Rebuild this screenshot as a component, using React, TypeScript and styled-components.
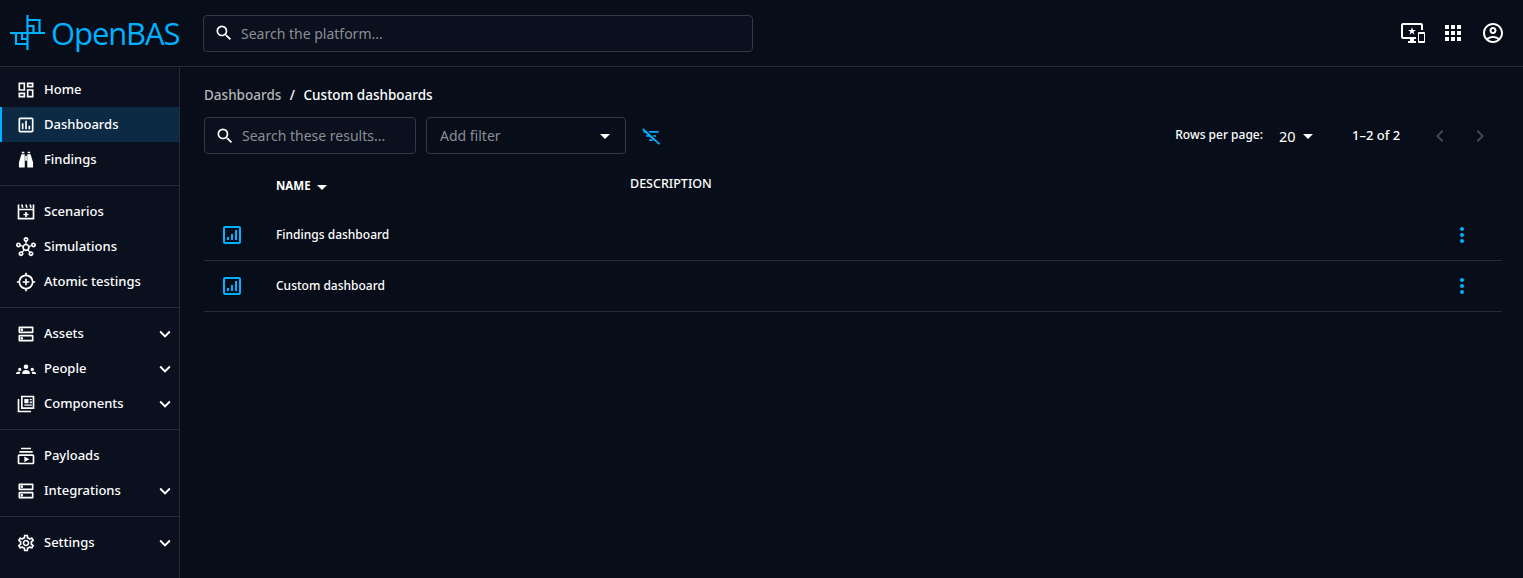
import * as React from "react";
import styled, { createGlobalStyle } from "styled-components";
import {
  MdApps,
  MdArrowDropDown,
  MdChevronLeft,
  MdChevronRight,
  MdExpandMore,
  MdMoreVert,
  MdOutlineAccountCircle,
  MdOutlineDashboard,
  MdOutlineDns,
  MdOutlineHub,
  MdOutlineImportantDevices,
  MdOutlineInsertChart,
  MdOutlineSettings,
  MdOutlineSubscriptions,
  MdSearch,
} from "react-icons/md";

const accent = "#00b1ff";
const line = "#262b37";

const GlobalStyle = createGlobalStyle`
  html, body { margin: 0; height: 100%; background: #070d19; }
  body { font-family: "Noto Sans", Roboto, sans-serif; color: #fff; overflow: hidden; }
  * { box-sizing: border-box; }
`;

const Page = styled.div`
  height: 578px;
  display: flex;
  flex-direction: column;
`;

const TopBar = styled.header`
  height: 67px;
  flex-shrink: 0;
  display: flex;
  align-items: center;
  padding: 0 18px 0 10px;
  border-bottom: 1px solid ${line};
`;

const Logo = styled.div`
  width: 193px;
  display: flex;
  align-items: center;
  gap: 5px;
  color: ${accent};
`;

const LogoText = styled.span`
  font-family: "Open Sans", sans-serif;
  font-weight: 400;
  font-size: 31px;
  letter-spacing: -1.1px;
  line-height: 36px;
`;

const SearchField = styled.div<{ $width: number; $height: number }>`
  width: ${(p) => p.$width}px;
  height: ${(p) => p.$height}px;
  display: flex;
  align-items: center;
  gap: 7px;
  padding: 0 10px;
  background: #0a101e;
  border: 1px solid #333843;
  border-radius: 4px;
  color: #fff;
  font-size: 20px;
`;

const Placeholder = styled.span`
  font-size: 14px;
  color: #8b8e94;
`;

const TopActions = styled.div`
  margin-left: auto;
  display: flex;
  align-items: center;
  gap: 16px;
  font-size: 24px;
`;

const Body = styled.div`
  flex: 1;
  display: flex;
  min-height: 0;
`;

const Sidebar = styled.nav`
  width: 180px;
  flex-shrink: 0;
  padding-top: 5px;
  background: #0a101e;
  border-right: 1px solid ${line};
`;

const NavGroup = styled.div`
  padding: 8px 0;
  border-bottom: 1px solid ${line};
  &:first-child {
    padding-top: 0;
  }
  &:last-child {
    border-bottom: 0;
  }
`;

const NavItem = styled.div<{ $active?: boolean }>`
  height: 35px;
  display: flex;
  align-items: center;
  padding-right: 3px;
  font-size: 13px;
  font-weight: 500;
  background: ${(p) => (p.$active ? "#0c2a43" : "transparent")};
  border-left: ${(p) => (p.$active ? `2px solid ${accent}` : "0")};
  padding-left: ${(p) => (p.$active ? "14px" : "16px")};
`;

const NavIcon = styled.span`
  width: 20px;
  height: 20px;
  margin-right: 8px;
  display: flex;
  font-size: 20px;
`;

const NavLabel = styled.span`
  padding-bottom: 2px;
`;

const NavChevron = styled.span`
  margin-left: auto;
  display: flex;
  font-size: 22px;
`;

const Main = styled.main`
  flex: 1;
  min-width: 0;
  padding: 21px 21px 0 24px;
`;

const Breadcrumb = styled.div`
  display: flex;
  gap: 8.5px;
  height: 14px;
  align-items: center;
  font-size: 13.5px;
  font-weight: 500;
`;

const Crumb = styled.span<{ $muted?: boolean }>`
  color: ${(p) => (p.$muted ? "#b4b6ba" : "#fff")};
`;

const Toolbar = styled.div`
  margin-top: 15px;
  display: flex;
  align-items: center;
`;

const FilterSelect = styled.div`
  width: 200px;
  height: 37px;
  margin-left: 10px;
  display: flex;
  align-items: center;
  justify-content: space-between;
  padding: 0 8px 0 13px;
  border: 1px solid #333843;
  border-radius: 4px;
  font-size: 24px;
`;

const ClearFilter = styled.span`
  margin-left: 15px;
  display: flex;
  color: ${accent};
`;

const Pager = styled.div`
  margin-left: auto;
  margin-right: 2px;
  display: flex;
  align-items: center;
  font-size: 12px;
  font-weight: 500;
`;

const PagerText = styled.span`
  padding-bottom: 2px;
`;

const PerPage = styled.span`
  display: flex;
  align-items: center;
  margin-left: 16px;
  width: 73px;
  font-size: 14.5px;
  font-weight: 400;
`;

const Range = styled.span`
  width: 68px;
  padding-bottom: 2px;
  font-size: 13px;
`;

const PageButton = styled.span`
  width: 40px;
  display: flex;
  justify-content: center;
  font-size: 24px;
  color: #43474f;
`;

const HeaderRow = styled.div`
  margin-top: 20px;
  height: 36px;
  display: flex;
`;

const NameHead = styled.div`
  width: 354px;
  margin-left: 72px;
  display: flex;
  align-items: center;
  height: 25px;
  font-size: 11.5px;
  font-weight: 700;
  svg {
    margin-left: -1px;
  }
`;

const NameText = styled.span`
  padding-bottom: 2px;
`;

const DescriptionHead = styled.div`
  height: 19px;
  line-height: 19px;
  font-size: 12.5px;
  font-weight: 500;
`;

const Row = styled.div`
  height: 51px;
  display: flex;
  align-items: center;
  border-bottom: 1px solid ${line};
  font-size: 12px;
  font-weight: 500;
`;

const RowLabel = styled.span`
  padding-bottom: 2px;
`;

const RowIcon = styled.span`
  width: 72px;
  padding-left: 16px;
  display: flex;
  font-size: 24px;
  color: ${accent};
`;

const RowAction = styled.span`
  margin-left: auto;
  margin-right: 28px;
  display: flex;
  font-size: 24px;
  color: ${accent};
`;

const Svg = ({ children }: { children: React.ReactNode }) => (
  <svg viewBox="0 0 24 24" width="20" height="20" fill="currentColor">
    {children}
  </svg>
);

const LogoMark = () => (
  <svg width="36" height="36" viewBox="0 0 36 36" fill="none" stroke="currentColor" strokeWidth="2.2">
    <path d="M0 18h35M17.5 0v35M17.5 5h12v13M6 18v11h11.5M12 18v6h5.5M17.5 11h6v7" />
  </svg>
);

const Binoculars = () => (
  <Svg>
    <path d="M7 2h3v2H7zM14 2h3v2h-3zM6.500 5h4v15a1 1 0 0 1-1 1h-5a1 1 0 0 1-1-1v-5zM13.500 5h4l3 10v5a1 1 0 0 1-1 1h-5a1 1 0 0 1-1-1zM11 7h2v6h-2z" />
  </Svg>
);

const Clapper = () => (
  <Svg>
    <path
      fillRule="evenodd"
      d="M2 8h20v13H2zM4 10v9h16v-9zM2 3h2v5H2zM6 3h2l1 4H7zM11 3h2l1 4h-2zM16 3h2l1 4h-2zM20 3h2v5h-2zM11 12h2v2h2v2h-2v2h-2v-2H9v-2h2z"
    />
  </Svg>
);

const Target = () => (
  <Svg>
    <path
      fillRule="evenodd"
      d="M11 1h2v2.100a9 9 0 0 1 7.900 7.900H23v2h-2.100a9 9 0 0 1-7.900 7.900V23h-2v-2.100A9 9 0 0 1 3.100 13H1v-2h2.100A9 9 0 0 1 11 3.100zM12 5a7 7 0 1 0 0 14 7 7 0 0 0 0-14zM11 8h2v3h3v2h-3v3h-2v-3H8v-2h3z"
    />
  </Svg>
);

const People = () => (
  <Svg>
    <path d="M12 6.500a2.800 2.800 0 1 1 0 5.600 2.800 2.800 0 0 1 0-5.600zM7.500 18v-1.600c0-1.700 2-3.200 4.500-3.200s4.500 1.500 4.500 3.200V18zM4.500 10.500a2 2 0 1 1 0 4 2 2 0 0 1 0-4zM19.500 10.500a2 2 0 1 1 0 4 2 2 0 0 1 0-4zM0 18v-1c0-1 1.500-1.800 3.500-1.800.7 0 1.300.1 1.800.3-.5.700-.8 1.500-.8 2.500zM24 18v-1c0-1-1.500-1.800-3.500-1.800-.7 0-1.300.1-1.800.3.500.700.800 1.500.800 2.500z" />
  </Svg>
);

const Papers = () => (
  <Svg>
    <path
      fillRule="evenodd"
      d="M6 2h16v16H6zM8 4v12h12V4zM2 6h2v14h14v2H2zM10 6h5v5h-5zM16.500 6H19v1.500h-2.500zM16.500 9H19v2h-2.500zM10 12.500h9V14h-9z"
    />
  </Svg>
);

const FilterOff = () => (
  <svg viewBox="0 0 24 24" width="20" height="20" fill="currentColor">
    <path d="M10.830 8H21V6H8.830zm5 5H18v-2h-4.170zM14 16.830V18h-4v-2h3.170zM2.810 2.810 1.390 4.220 3.170 6H3v2h2.170l3 3H6v2h4.170L21.780 22.610l1.410-1.410z" />
  </svg>
);

const SmallChart = () => (
  <svg viewBox="0 0 24 24" width="24" height="24" fill="currentColor">
    <path
      fillRule="evenodd"
      d="M5 3h14a2 2 0 0 1 2 2v14a2 2 0 0 1-2 2H5a2 2 0 0 1-2-2V5a2 2 0 0 1 2-2zM5 5v14h14V5zM7 14h2v3H7zM11 11h2v6h-2zM15 7h2v10h-2z"
    />
  </svg>
);

type Item = { label: string; icon: React.ReactNode; active?: boolean; more?: boolean };

const groups: Item[][] = [
  [
    { label: "Home", icon: <MdOutlineDashboard /> },
    { label: "Dashboards", icon: <MdOutlineInsertChart />, active: true },
    { label: "Findings", icon: <Binoculars /> },
  ],
  [
    { label: "Scenarios", icon: <Clapper /> },
    { label: "Simulations", icon: <MdOutlineHub /> },
    { label: "Atomic testings", icon: <Target /> },
  ],
  [
    { label: "Assets", icon: <MdOutlineDns />, more: true },
    { label: "People", icon: <People />, more: true },
    { label: "Components", icon: <Papers />, more: true },
  ],
  [
    { label: "Payloads", icon: <MdOutlineSubscriptions /> },
    { label: "Integrations", icon: <MdOutlineDns />, more: true },
  ],
  [{ label: "Settings", icon: <MdOutlineSettings />, more: true }],
];

const dashboards = ["Findings dashboard", "Custom dashboard"];

export default function App() {
  return (
    <Page>
      <GlobalStyle />
      <TopBar>
        <Logo>
          <LogoMark />
          <LogoText>OpenBAS</LogoText>
        </Logo>
        <SearchField $width={550} $height={37}>
          <MdSearch />
          <Placeholder>Search the platform...</Placeholder>
        </SearchField>
        <TopActions>
          <MdOutlineImportantDevices />
          <MdApps />
          <MdOutlineAccountCircle />
        </TopActions>
      </TopBar>
      <Body>
        <Sidebar>
          {groups.map((group, i) => (
            <NavGroup key={i}>
              {group.map((item) => (
                <NavItem key={item.label} $active={item.active}>
                  <NavIcon>{item.icon}</NavIcon>
                  <NavLabel>{item.label}</NavLabel>
                  {item.more && (
                    <NavChevron>
                      <MdExpandMore />
                    </NavChevron>
                  )}
                </NavItem>
              ))}
            </NavGroup>
          ))}
        </Sidebar>
        <Main>
          <Breadcrumb>
            <Crumb $muted>Dashboards</Crumb>
            <Crumb>/</Crumb>
            <Crumb>Custom dashboards</Crumb>
          </Breadcrumb>
          <Toolbar>
            <SearchField $width={212} $height={37}>
              <MdSearch />
              <Placeholder>Search these results...</Placeholder>
            </SearchField>
            <FilterSelect>
              <Placeholder>Add filter</Placeholder>
              <MdArrowDropDown />
            </FilterSelect>
            <ClearFilter>
              <FilterOff />
            </ClearFilter>
            <Pager>
              <PagerText>Rows per page:</PagerText>
              <PerPage>
                20
                <MdArrowDropDown size={24} />
              </PerPage>
              <Range>1–2 of 2</Range>
              <PageButton>
                <MdChevronLeft />
              </PageButton>
              <PageButton>
                <MdChevronRight />
              </PageButton>
            </Pager>
          </Toolbar>
          <HeaderRow>
            <NameHead>
              <NameText>NAME</NameText>
              <MdArrowDropDown size={24} />
            </NameHead>
            <DescriptionHead>DESCRIPTION</DescriptionHead>
          </HeaderRow>
          {dashboards.map((name) => (
            <Row key={name}>
              <RowIcon>
                <SmallChart />
              </RowIcon>
              <RowLabel>{name}</RowLabel>
              <RowAction>
                <MdMoreVert />
              </RowAction>
            </Row>
          ))}
        </Main>
      </Body>
    </Page>
  );
}
